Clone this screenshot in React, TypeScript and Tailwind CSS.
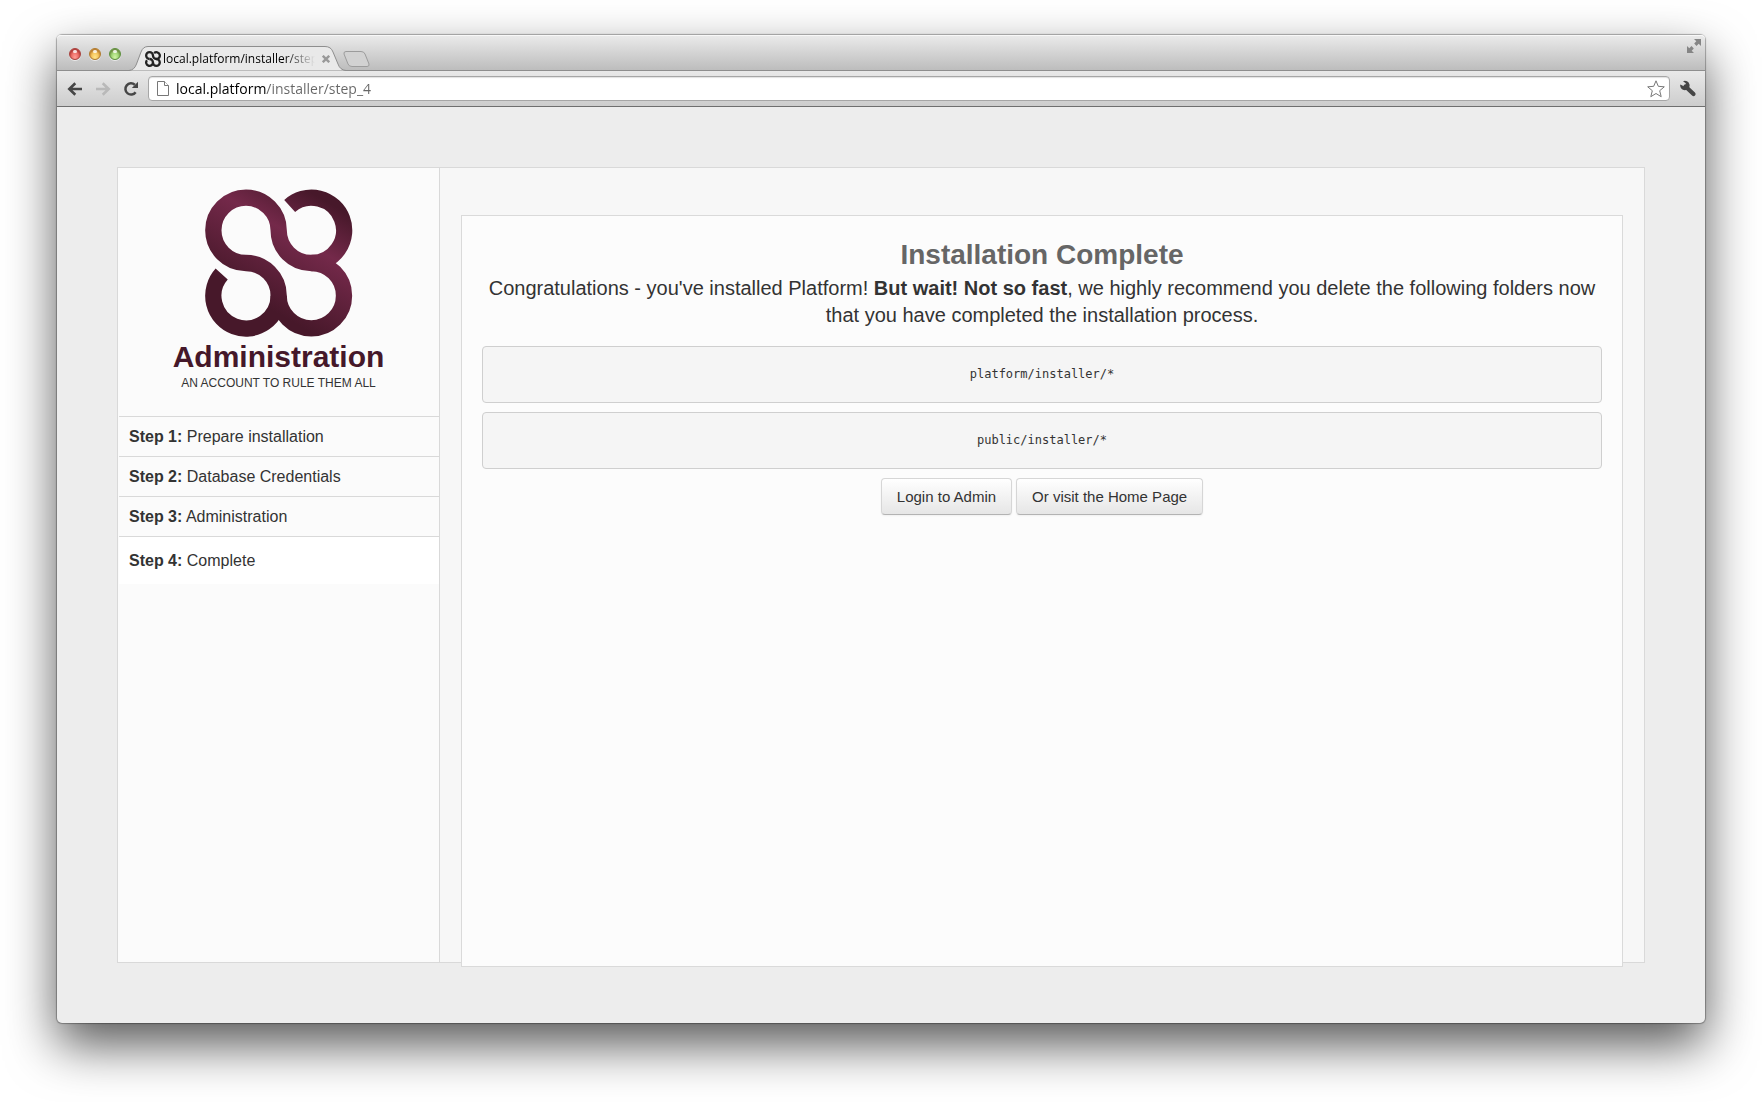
import React from "react";

const steps = [
  { label: "Step 1:", title: "Prepare installation" },
  { label: "Step 2:", title: "Database Credentials" },
  { label: "Step 3:", title: "Administration" },
  { label: "Step 4:", title: "Complete", current: true },
];

const folders = ["platform/installer/*", "public/installer/*"];

function KnotPaths() {
  return (
    <>
      <path d="M409 309A98 98 0 1 1 507 211A98 98 0 0 0 605 309A98 98 0 1 1 507 407" />
      <path d="M540 138A98 98 0 1 1 605 309" />
      <path d="M409 309A98 98 0 0 1 507 407A98 98 0 1 1 336 342" />
    </>
  );
}

function Logo() {
  return (
    <svg viewBox="286 88 444 442" className="h-[148px] w-[148px]" fill="none" stroke="url(#knot)" strokeWidth="49" aria-label="Platform">
      <defs>
        <linearGradient id="knot" gradientUnits="userSpaceOnUse" x1="582" y1="85" x2="400" y2="400">
          <stop offset="0" stopColor="#47182a" />
          <stop offset="0.38" stopColor="#74294a" />
          <stop offset="1" stopColor="#47182a" />
        </linearGradient>
      </defs>
      <KnotPaths />
    </svg>
  );
}

function Light({ className, label }: { className: string; label: string }) {
  return (
    <button
      aria-label={label}
      className={"relative h-3 w-3 rounded-full border shadow-[inset_0_2px_2px_rgba(60,0,0,0.35),0_1px_0_rgba(255,255,255,0.6)] " + className}
    >
      <span className="absolute left-[3px] top-px h-[3px] w-1 rounded-full bg-white/80" />
    </button>
  );
}

function TitleBar() {
  return (
    <div className="flex h-9 rounded-t-[4px] border-b border-[#8e8e8e] bg-linear-to-b from-[#ebebeb] to-[#bdbdbd] pl-3 pr-1 shadow-[inset_0_1px_0_#f8f8f8]">
      <div className="flex items-center gap-2 pt-[3px]">
        <Light label="Close" className="border-[#a8403c] bg-radial-[at_50%_85%] from-[#ff9c95] to-[#dc3e3a]" />
        <Light label="Minimize" className="border-[#b07a2c] bg-radial-[at_50%_85%] from-[#ffe58a] to-[#eea42e]" />
        <Light label="Zoom" className="border-[#5c8f3c] bg-radial-[at_50%_85%] from-[#d0f5a4] to-[#72b848]" />
      </div>
      <div className="relative -mb-px ml-2 flex h-[25px] w-[218px] items-center self-end pl-4 pr-[17px]">
        <svg viewBox="0 0 218 25" className="absolute inset-0 h-full w-full" fill="none">
          <path d="M0 24.500C4 24 6 22 7.500 18L12 6Q14 .5 19 .5H196Q202 .5 204 6L209 18Q211 24 217 24.500" fill="#e9e9e9" stroke="#8e8e8e" />
        </svg>
        <svg viewBox="278 80 460 458" className="relative h-4 w-4 shrink-0" fill="none" stroke="#222" strokeWidth="66">
          <KnotPaths />
        </svg>
        <span className="relative ml-[2px] w-[152px] shrink-0 overflow-hidden whitespace-nowrap bg-linear-to-r from-black from-80% to-transparent bg-clip-text text-[12px] leading-4 text-transparent">
          local.platform/installer/step_4
        </span>
        <button aria-label="Close tab" className="relative ml-[7px]">
          <svg viewBox="0 0 8 8" className="h-2 w-2" stroke="#999" strokeWidth="2.400">
            <path d="M.8.8l6.400 6.400M7.200.8L.8 7.200" />
          </svg>
        </button>
      </div>
      <button aria-label="New tab" className="-ml-1 mb-[3px] self-end">
        <svg viewBox="0 0 27 16" className="h-4 w-[27px]" fill="#d2d2d2" stroke="#9c9c9c">
          <path d="M3 .5H18Q21 .5 22 3L26 13Q26.500 15.500 24 15.500H9Q6 15.500 5 13L1 3Q.5 .5 3 .5Z" />
        </svg>
      </button>
      <button aria-label="Full screen" className="ml-auto mt-1 self-start">
        <svg viewBox="0 0 14 14" className="h-[14px] w-[14px]" fill="#858585">
          <path d="M7 0H14V7L11.700 4.700L9.500 7L7.200 4.600L9.300 2.300Z" />
          <path d="M0 7L2.300 9.300L4.500 7L6.800 9.400L4.700 11.700L7 14H0Z" />
        </svg>
      </button>
    </div>
  );
}

function Toolbar() {
  return (
    <div className="flex h-9 items-center border-b border-[#6f6f6f] bg-linear-to-b from-[#e9e9e9] to-[#cdcdcd] pl-[10px] pr-2">
      <button aria-label="Back">
        <svg viewBox="0 0 16 14" className="h-[14px] w-4" fill="none" stroke="#464646" strokeWidth="2.600">
          <path d="M15 7H2.500M8.300 1.200L2.300 7L8.300 12.800" />
        </svg>
      </button>
      <button aria-label="Forward" className="ml-3">
        <svg viewBox="0 0 16 14" className="h-[14px] w-4" fill="none" stroke="#b9b9b9" strokeWidth="2.600">
          <path d="M1 7H13.500M7.700 1.200L13.700 7L7.700 12.800" />
        </svg>
      </button>
      <button aria-label="Reload" className="ml-3">
        <svg viewBox="0 0 16 16" className="h-4 w-4" fill="none" stroke="#464646" strokeWidth="2.500">
          <path d="M12.600 11.200A5.600 5.600 0 1 1 11.800 3.800" />
          <path d="M15 .8V7H8.800Z" fill="#464646" stroke="none" />
        </svg>
      </button>
      <div className="ml-[9px] flex h-[25px] min-w-0 flex-1 items-center rounded-[4px] border border-[#a6a6a6] bg-white pl-2 pr-1 shadow-[inset_0_1px_1px_rgba(0,0,0,0.12)]">
        <svg viewBox="0 0 12 15" className="h-[15px] w-3 shrink-0" fill="#fff" stroke="#777">
          <path d="M.5 .5H7.500L11.500 4.500V14.500H.5Z" />
          <path d="M7.500 .5V4.500H11.500" />
        </svg>
        <input
          aria-label="Address"
          defaultValue="local.platform/installer/step_4"
          className="ml-[7px] min-w-0 flex-1 bg-[linear-gradient(90deg,#000_90px,#666_90px)] bg-clip-text text-[14px] leading-5 text-transparent outline-none"
        />
        <button aria-label="Bookmark">
          <svg viewBox="0 0 18 18" className="h-[18px] w-[18px]" fill="#fff" stroke="#777" strokeLinejoin="round">
            <path d="M9 .8L11.300 6.300L17.300 6.800L12.700 10.700L14.200 16.700L9 13.500L3.800 16.700L5.300 10.700L.7 6.800L6.700 6.300Z" />
          </svg>
        </button>
      </div>
      <button aria-label="Settings" className="ml-[9px]">
        <svg viewBox="0 0 18 18" className="h-[18px] w-[18px]">
          <path d="M6.500 6.500L14.500 14" stroke="#464646" strokeWidth="4.200" strokeLinecap="round" />
          <path d="M4 1.200A4.700 4.700 0 1 1 1.300 4.500L4.800 6.200L6.600 5.400L6.800 3.300Z" fill="#464646" />
        </svg>
      </button>
    </div>
  );
}

function Sidebar() {
  return (
    <aside className="w-[322px] shrink-0 border-r border-[#d9d9d9] bg-[#fbfbfb]">
      <header className="flex flex-col items-center pb-[25px] pt-[21px]">
        <Logo />
        <h1 className="mt-[2px] text-[30px] font-bold leading-9 text-[#45182a]">Administration</h1>
        <p className="text-[12px] leading-4 text-[#333]">AN ACCOUNT TO RULE THEM ALL</p>
      </header>
      <ol className="ml-px text-[16px] leading-6 text-[#333]">
        {steps.map((step) => (
          <li
            key={step.label}
            className={"border-t border-[#d9d9d9] pl-[10px] " + (step.current ? "bg-white pb-[11px] pt-3" : "pb-[7px] pt-2")}
          >
            <strong>{step.label}</strong> {step.title}
          </li>
        ))}
      </ol>
    </aside>
  );
}

function ButtonLink({ href, children }: { href: string; children: React.ReactNode }) {
  return (
    <a
      href={href}
      className="rounded-[4px] border border-[#d6d6d6] border-b-[#b3b3b3] bg-linear-to-b from-white to-[#e6e6e6] px-[15px] pb-[7px] pt-2 text-[15px] leading-5 text-[#333] shadow-[0_1px_2px_rgba(0,0,0,0.05)]"
    >
      {children}
    </a>
  );
}

function Content() {
  return (
    <main className="mx-[21px] -mb-[5px] mt-[47px] min-w-0 flex-1 border border-[#dadada] bg-[#fcfcfc] px-5 pt-5 text-center text-[#333]">
      <h2 className="text-[28px] font-bold leading-[38px] text-[#666]">Installation Complete</h2>
      <p className="mt-px text-[20px] leading-[27px]">
        Congratulations - you've installed Platform! <strong>But wait! Not so fast</strong>, we highly recommend you
        delete the following folders now that you have completed the installation process.
      </p>
      <div className="mt-[17px] flex flex-col gap-[9px]">
        {folders.map((folder) => (
          <pre
            key={folder}
            className="rounded-[4px] border border-[#cfcfcf] bg-[#f5f5f5] py-4 font-['DejaVu_Sans_Mono',monospace] text-[12px] leading-[23px]"
          >
            {folder}
          </pre>
        ))}
      </div>
      <div className="mt-[9px] flex justify-center gap-1">
        <ButtonLink href="#admin">Login to Admin</ButtonLink>
        <ButtonLink href="#home">Or visit the Home Page</ButtonLink>
      </div>
    </main>
  );
}

export default function App() {
  return (
    <div className="flex min-h-screen flex-col bg-white px-[57px] pb-[79px] pt-[35px] font-['Liberation_Sans',Arial,sans-serif]">
      <div className="flex flex-1 flex-col rounded-[5px] bg-[#ededed] shadow-[0_0_1px_1px_rgba(0,0,0,0.3),0_22px_50px_rgba(0,0,0,0.66)]">
        <div className="font-['Open_Sans',sans-serif]">
          <TitleBar />
          <Toolbar />
        </div>
        <div className="flex flex-1 p-[60px]">
          <div className="flex flex-1 border border-[#d9d9d9] bg-[#f7f7f7]">
            <Sidebar />
            <Content />
          </div>
        </div>
      </div>
    </div>
  );
}
